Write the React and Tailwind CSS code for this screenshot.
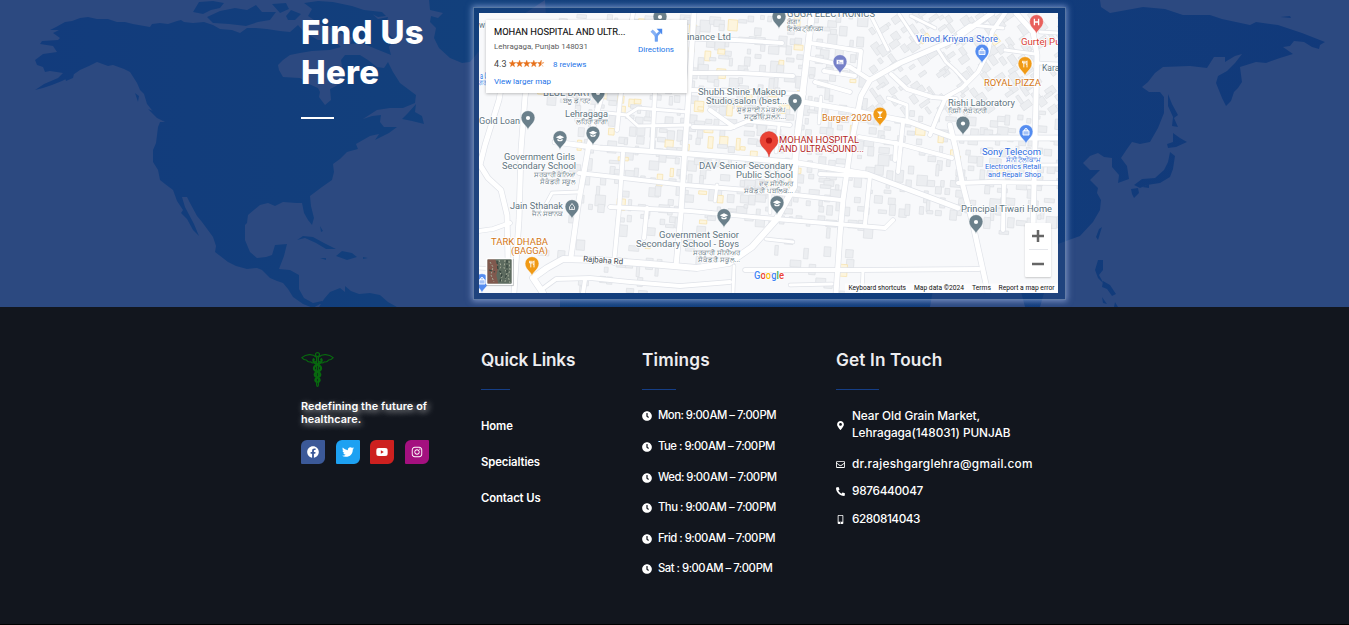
import React from "react";
import {
  FaFacebook,
  FaTwitter,
  FaYoutube,
  FaInstagram,
  FaClock,
  FaMapMarkerAlt,
  FaRegEnvelope,
  FaPhoneAlt,
  FaMobileAlt,
} from "react-icons/fa";

const LAND = [
  // North and Central America
  "M50,30 L56,27 65,22 72,21 80,18 88,17 97,19 108,19 117,22 125,22 133,24 150,27 152,24 160,23 168,24 177,21 181,20 184,22 193,23 204,22 213,25 220,29 232,30 240,33 247,28 256,28 267,29 280,31 290,32 298,25 304,32 318,40 334,40 341,47 330,50 312,51 300,53 290,55 283,60 278,65 279,70 283,77 300,78 309,84 318,88 320,92 319,97 325,105 331,100 330,89 336,86 343,80 342,67 341,60 345,55 360,55 368,60 377,67 384,68 388,62 393,72 400,83 408,89 416,95 415,103 403,108 390,108 377,110 363,119 372,116 381,115 380,122 384,127 397,127 389,133 375,140 379,134 370,136 356,144 358,149 347,152 340,159 333,164 334,172 332,180 322,187 310,196 311,206 314,218 312,225 308,220 304,213 302,203 296,203 283,202 275,206 268,203 260,205 248,215 247,223 245,225 245,240 250,252 257,258 266,257 272,255 275,245 287,244 284,256 279,269 290,270 299,275 299,289 304,298 313,303 322,301 327,305 320,304 313,308 303,304 293,297 288,289 283,283 277,281 270,278 262,270 257,268 247,269 236,266 228,262 215,252 216,246 213,237 202,222 197,216 190,203 187,197 182,197 185,207 194,224 199,236 193,230 187,219 181,213 183,210 177,201 173,190 165,184 160,180 158,170 153,162 153,150 156,143 158,127 160,122 165,122 155,114 147,104 144,94 140,90 137,83 130,72 124,69 113,65 108,66 97,62 89,66 80,70 70,77 62,81 52,85 43,88 35,90 44,84 58,78 63,73 50,71 45,72 43,67 37,65 35,60 43,54 57,52 53,46 40,44 42,41 58,40 60,38 53,33 59,30Z",
  // Arctic archipelago
  "M193,12 L199,2 213,1 224,3 220,8 211,10 203,14Z M207,17 L220,11 235,8 247,10 256,5 262,12 276,12 270,20 258,22 246,26 229,24 213,23Z M272,4 L286,3 289,9 280,13Z M286,16 L291,10 301,14 295,20 288,20Z M304,3 L318,1 333,2 352,6 370,12 378,19 388,17 385,29 394,40 389,47 391,55 376,49 362,43 350,44 353,38 342,34 330,27 320,24 308,16 312,9Z M364,10 L382,12 386,16 378,17Z",
  // Pacific coast islands
  "M135,93 L139,96 138,102Z M148,109 L156,112 165,122 157,118Z M65,78 L74,74 73,78 66,81Z",
  // Newfoundland
  "M416,104 L408,113 402,119 412,121 424,124 422,116 415,112Z",
  // Caribbean
  "M297,240 L303,236 313,237 324,243 336,249 326,249 316,243 305,238Z M336,256 L342,251 352,253 357,257 347,260Z M320,258 L326,258 326,260Z M363,257 L368,258 363,259Z M320,226 L323,231 321,232Z",
  // South America
  "M319,307 L324,299 330,292 340,288 345,292 345,286 351,291 359,294 370,293 380,295 388,302 397,307Z",
  // Greenland
  "M429,0 L545,0 530,10 500,30 480,50 470,62 462,63 450,58 439,48 434,38 436,28 430,22 431,16 438,18 443,13 430,10Z",
  // Northern Eurasia
  "M545,0 L1100,0 1101,7 1110,13 1121,11 1143,7 1165,9 1183,15 1210,15 1222,19 1250,25 1256,22 1278,25 1302,33 1325,42 1320,45 1319,49 1312,47 1304,42 1294,41 1290,46 1283,47 1293,54 1280,58 1266,63 1256,62 1240,67 1242,82 1238,88 1234,92 1231,101 1226,106 1222,98 1216,83 1218,76 1227,71 1235,63 1242,54 1235,56 1225,62 1225,57 1214,57 1207,68 1190,66 1163,67 1155,73 1148,82 1142,87 1149,92 1160,92 1164,97 1164,113 1158,128 1150,142 1140,144 1132,142 1127,149 1121,158 1127,166 1129,179 1118,183 1119,175 1112,167 1112,158 1104,157 1098,153 1090,156 1083,163 1090,170 1100,170 1090,180 1098,188 1097,193 1101,200 1100,210 1093,222 1080,236 1058,244 1040,307 1025,307 1010,250 940,250 930,307 560,307 560,250Z",
  "M1168,94 L1172,104 1178,115 1174,118 1178,127 1172,126 1173,117 1168,106Z",
  "M1173,133 L1180,138 1187,142 1176,147 1168,148 1167,144 1173,142Z",
  "M1170,152 L1175,156 1173,169 1170,177 1160,183 1147,185 1140,188 1134,185 1142,179 1155,178 1164,170 1168,162Z",
  "M1131,189 L1138,188 1139,193 1134,198 1132,194Z M1142,187 L1149,184 1149,188Z",
  "M1099,229 L1102,227 1098,240 1096,237Z",
  "M1098,260 L1103,260 1103,270 1099,275 1104,284 1098,278 1095,270Z M1103,281 L1110,285 1116,294 1112,296 1107,289 1102,287Z M1102,297 L1107,304 1103,303Z M1115,302 L1118,307 1114,307Z",
  "M1280,17 L1290,16 1291,18Z",
];

const ROADS = [
  [5, "M694,13 L691,60 685,147 681,213 676,266"],
  [6, "M812,13 L803,90 796,147 794,187 776,220 752,247 729,263 697,268 650,264 600,260 563,259 547,268 533,278 543,293"],
  [5, "M555,142 L600,148 690,154 792,162 867,174 958,208"],
  [4, "M579,173 L685,185 760,191 841,200"],
  [4, "M610,207 L690,211 776,219 885,228 893,220"],
  [5, "M797,101 L850,110 910,122 954,138 1058,138"],
  [5, "M950,125 L956,150 962,182 973,225 988,293"],
  [4, "M859,137 L900,144 952,158"],
  [5, "M992,13 L954,40 900,63 870,80 861,96 850,150 843,200 840,235 836,293"],
  [4, "M745,270 L860,270 979,269"],
  [5, "M532,60 L525,97 521,150 519,220 514,292"],
  [5, "M506,60 L499,100 485,145 480,165 488,178 501,190 507,215 508,260"],
  [4, "M479,231 L493,229 510,223"],
  [3, "M479,162 L485,145 M479,268 L509,270"],
  [4, "M693,73 L740,73 793,76 M692,90 L804,94 M673,38 L735,40 782,43"],
  [4, "M633,13 L620,100 617,130 M655,93 L652,150"],
  [5, "M606,80 L596,115 588,150 579,200 571,257"],
  [3, "M598,112 L627,115 638,108 688,112 M627,116 L638,126 690,125"],
  [4, "M693,127 L731,128 748,121 790,125 M710,110 L734,127"],
  [5, "M1016,13 L1033,32 1037,55 1035,140 1033,230"],
  [4, "M1005,13 L992,32 988,52 978,72 962,88 946,97 938,115 930,135"],
  [4, "M891,74 L907,89 932,97 956,99"],
  [3, "M937,48 L946,62 955,70 966,82 M958,33 L970,25 1003,28"],
  [3, "M870,14 L888,50 M899,14 L918,43 M911,16 L935,28"],
  [4, "M810,43 L830,46 861,51 859,70 M809,58 L850,67 870,80 M824,71 L855,76 M815,82 L850,92"],
  [3, "M821,97 L819,123 M907,121 L907,105 888,98"],
  [4, "M958,183 L990,182 1058,183 M1004,183 L1003,230"],
  [4, "M820,174 L870,176 865,224 M903,122 L898,172 M896,143 L895,160"],
  [4, "M541,290 L556,279 590,278 630,282 680,286 730,282 M585,280 L583,293"],
  [4, "M623,153 L619,210 614,263 M647,208 L644,238"],
  [3, "M717,185 L715,201 M734,266 L733,293 M766,239 L793,242 M770,213 L770,191"],
  [3, "M863,270 L862,293 M790,285 L832,284 M776,152 L779,125"],
  [3, "M1005,50 L1035,54 M1037,63 L1058,64 M1033,165 L1058,165 M1040,32 L1058,33"],
  [3, "M540,215 L552,193 578,192"],
];

function makeBuildings() {
  let s = 77;
  const rnd = () => {
    s = (s * 1103515245 + 12345) % 2147483648;
    return s / 2147483648;
  };
  const out = [];
  for (let y = 14; y < 292; y += 10) {
    for (let x = 534; x < 1056; x += 10) {
      const px = x + rnd() * 7;
      const py = y + rnd() * 7;
      const w = 3 + rnd() * 8;
      const h = 3 + rnd() * 9;
      const keep = rnd();
      const warm = rnd();
      const open =
        (px > 868 && px < 965 && py > 212) ||
        (px > 850 && py > 232) ||
        (px > 575 && px < 612 && py > 210 && py < 235) ||
        (px > 700 && px < 775 && py > 222) ||
        (px > 525 && px < 575 && py > 100 && keep > 0.12) ||
        (py > 225 && keep > 0.3);
      if (open || keep > 0.74) continue;
      out.push({ px, py, w, h, rot: px > 860 && py < 110 ? -35 : 4, warm: warm > (px < 800 && py < 200 ? 0.87 : 0.975) });
    }
  }
  return out;
}
const BUILDINGS = makeBuildings();

const GREY = "#5f7581";
const LABELS = [
  // x, y, width, size, colour, anchor, text
  [787, 17, 88, 9.2, GREY, "start", "GOGA ELECTRONICS"],
  [787, 24, 13, 7, GREY, "start", "ਗੋਗਾ"],
  [787, 30.5, 37, 7, GREY, "start", "ਇਲੈਕਟ੍ਰੋਨਿਕਸ"],
  [687, 40, 44, 9.2, GREY, "start", "inance Ltd"],
  [479, 28, 6, 9, GREY, "start", "w"],
  [480, 79, 8, 9, "#1a73e8", "start", "a C"],
  [479, 85, 7, 7, "#1a73e8", "start", "ਗਰ"],
  [543, 96, 48, 9.2, GREY, "start", "BLUE DART"],
  [563, 102.5, 27, 7, GREY, "start", "ਬਲੂ ਡਾਰਟ"],
  [565, 117, 43, 9.2, GREY, "start", "Lehragaga"],
  [576, 123.5, 32, 7, GREY, "start", "ਲਹਿਰਾਗਾਗਾ"],
  [479, 124, 41, 9.2, GREY, "start", "Gold Loan"],
  [575, 160, 71, 9.2, GREY, "end", "Government Girls"],
  [576, 169, 74, 9.2, GREY, "end", "Secondary School"],
  [576, 177, 42, 7, GREY, "end", "ਸਰਕਾਰੀ ਕੰਨਿਆ"],
  [576, 184, 36, 7, GREY, "end", "ਸੈਕੰਡਰੀ ਸਕੂਲ"],
  [563, 209, 53, 9.2, GREY, "end", "Jain Sthanak"],
  [563, 216, 31, 7, GREY, "end", "ਜੈਨ ਸਥਾਨਕ"],
  [548, 245, 57, 9.4, "#d27616", "end", "TARK DHABA"],
  [548, 254, 37, 9.4, "#d27616", "end", "(BAGGA)"],
  [786, 95, 88, 9.2, GREY, "end", "Shubh Shine Makeup"],
  [787, 104, 81, 9.2, GREY, "end", "Studio,salon (best..."],
  [786, 112, 49, 7, GREY, "end", "ਸ਼ੁਭ ਸ਼ਾਈਨ ਮੇਕਅੱਪ"],
  [786, 119, 42, 7, GREY, "end", "ਸਟੂਡੀਓ,ਸਲੋਨ..."],
  [793, 169, 94, 9.2, GREY, "end", "DAV Senior Secondary"],
  [793, 178, 57, 9.2, GREY, "end", "Public School"],
  [793, 186, 34, 7, GREY, "end", "ਦਵ ਸੀਨੀਅਰ"],
  [793, 193, 49, 7, GREY, "end", "ਸਕੈਡਰੀ ਪਬਲਿਕ..."],
  [739, 238, 80, 9.2, GREY, "end", "Government Senior"],
  [739, 247, 103, 9.2, GREY, "end", "Secondary School - Boys"],
  [740, 254.5, 47, 7, GREY, "end", "ਸਰਕਾਰੀ ਸੀਨੀਅਰ"],
  [740, 262, 42, 7, GREY, "end", "ਸੈਕੰਡਰੀ ਸਕੂਲ..."],
  [822, 120.5, 50, 9.4, "#d27616", "start", "Burger 2020"],
  [779, 142.5, 80, 9.4, "#b3261e", "start", "MOHAN HOSPITAL"],
  [779, 151.5, 85, 9.4, "#b3261e", "start", "AND ULTRASOUND..."],
  [916, 41.5, 82, 9.2, "#3d6fd9", "start", "Vinod Kriyana Store"],
  [1021, 44.5, 45, 9.2, "#d93c35", "start", "Gurtej Puri"],
  [984, 86, 57, 9.4, "#d27616", "start", "ROYAL PIZZA"],
  [1042, 70.5, 22, 9.2, GREY, "start", "Karan"],
  [948, 106, 67, 9.2, GREY, "start", "Rishi Laboratory"],
  [948, 113, 39, 7, GREY, "start", "ਰਿਸ਼ੀ ਲੈਬੋਰਟਰੀ"],
  [1041, 155, 59, 9.2, "#2d6be0", "end", "Sony Telecom"],
  [1041, 162, 35, 7, "#2d6be0", "end", "ਸੋਨੀ ਟੈਲੀਕਾਮ"],
  [1041, 169, 56, 7.6, "#2d6be0", "end", "Electronics Retail"],
  [1041, 176.5, 53, 7.6, "#2d6be0", "end", "and Repair Shop"],
  [961, 212, 91, 9.2, GREY, "start", "Principal Tiwari Home"],
];

const CAP = <path d="M-4.2,-.8 L0,-2.8 4.2,-.8 0,1.3Z M-2.6,.8 V2.4 C-1,3.6 1,3.6 2.6,2.4 V.8 L0,2.2Z" fill="#fff" />;
const DOT = <circle r="2.1" fill="#fff" />;
const FORK = <path d="M-2.4,-3.2 V-1 M-1.2,-3.2 V3.4 M0,-3.2 V-1 M-2.4,-1 H0 M2,3.4 V-3.2 C.9,-2.4 .9,-.6 1.2,.4 H2" stroke="#fff" strokeWidth=".9" fill="none" />;
const BAG = <path d="M-3,-1.2 H3 V3 H-3Z M-1.5,-1 V-2.4 C-1.4,-3.8 1.4,-3.8 1.5,-2.4 V-1" stroke="#fff" strokeWidth=".9" fill="#ffffff77" />;
const PINS = [
  [660, 17, "#6b808b", DOT],
  [779, 17, "#6b808b", DOT],
  [598, 93, "#6b808b", DOT],
  [528, 118, "#6b808b", DOT],
  [560, 138, "#6b808b", CAP],
  [593, 133.5, "#6b808b", CAP],
  [572, 207, "#6b808b", <path key="t" d="M-2.5,2.5 H2.5 V0 L0,-3.5 L-2.5,0Z M0,0 V2.5" fill="none" stroke="#fff" strokeWidth=".8" />],
  [795, 101, "#6b808b", DOT],
  [777, 203, "#6b808b", CAP],
  [724, 216, "#6b808b", CAP],
  [963, 123.5, "#6b808b", DOT],
  [976, 222, "#6b808b", DOT],
  [840, 62, "#7580c8", <path key="c" d="M-3.8,-2.4 H3.8 V2.6 H-3.8Z M-2,-.6 H-.5 M-2,1 H2.5" fill="#fff" stroke="#7580c8" strokeWidth=".7" />],
  [880, 114.5, "#f09a16", <path key="g" d="M-3,-3 H3 L.5,0 V2.6 H2 V3.4 H-2 V2.6 H-.5 V0Z" fill="#fff" />],
  [1025, 64, "#f09a16", FORK],
  [532, 264, "#f09a16", FORK],
  [982, 51.5, "#548cf0", BAG],
  [1026, 132, "#548cf0", BAG],
  [482, 281, "#548cf0", BAG],
  [1036.5, 22, "#e8605c", <path key="h" d="M-2.1,-3.2 V3.2 M2.1,-3.2 V3.2 M-2.1,0 H2.1" stroke="#fff" strokeWidth="1.3" />],
];

function WorldMap() {
  return (
    <svg className="absolute inset-0 h-full w-full" viewBox="0 0 1349 307" preserveAspectRatio="none">
      <defs>
        <linearGradient id="land" x1="0" x2="1349" y1="0" y2="0" gradientUnits="userSpaceOnUse">
          <stop offset="0" stopColor="#123b7c" />
          <stop offset=".35" stopColor="#12407c" />
          <stop offset="1" stopColor="#11397a" />
        </linearGradient>
      </defs>
      {LAND.map((d) => (
        <path key={d} d={d} fill="url(#land)" />
      ))}
    </svg>
  );
}

function StreetMap() {
  return (
    <svg className="block h-[280px] w-[579px]" viewBox="479 13 579 280" fontFamily="Roboto, 'Noto Sans', sans-serif">
      <rect x="479" y="13" width="579" height="280" fill="#f8f9fb" />
      <g>
        {BUILDINGS.map((b, i) => (
          <rect
            key={i}
            x={b.px}
            y={b.py}
            width={b.w}
            height={b.h}
            transform={`rotate(${b.rot} ${b.px} ${b.py})`}
            fill={b.warm ? "#fdf5de" : "#eceef1"}
            stroke={b.warm ? "#f6e2ab" : "#dee1e5"}
            strokeWidth=".7"
          />
        ))}
      </g>
      <g fill="none" strokeLinejoin="round" strokeLinecap="round">
        {ROADS.map(([w, d]) => (
          <path key={d} d={d} stroke="#dfe2e8" strokeWidth={w + 1.3} />
        ))}
        {ROADS.map(([w, d]) => (
          <path key={d} d={d} stroke="#ffffff" strokeWidth={w} />
        ))}
      </g>
      <g>
        {PINS.map(([x, y, c, glyph], i) => (
          <g key={i} transform={`translate(${x} ${y})`}>
            <path d="M0,12 C-.8,7.6 -6.9,5.6 -6.9,-.4 A6.9,6.9 0 0 1 6.9,-.4 C6.9,5.6 .8,7.6 0,12Z" fill={c} stroke="#fff" strokeWidth=".4" />
            {glyph}
          </g>
        ))}
        <path d="M769,157 C768,149.5 760,147.5 760,140.5 A9,9 0 0 1 778,140.5 C778,147.5 770,149.5 769,157Z" fill="#ea4335" stroke="#c5221f" strokeWidth=".4" />
        <circle cx="769" cy="140.5" r="3.1" fill="#b31412" />
      </g>
      <g paintOrder="stroke" stroke="#ffffff" strokeWidth="1.6" strokeLinejoin="round">
        {LABELS.map(([x, y, w, s, c, a, t]) => (
          <text key={t + y} x={x} y={y} fontSize={s} fill={c} textAnchor={a} textLength={w} lengthAdjust="spacingAndGlyphs">
            {t}
          </text>
        ))}
        <text x="583" y="261.5" fontSize="8" fill="#444b52" textLength="40" lengthAdjust="spacingAndGlyphs" transform="rotate(4 583 261)">
          Rajbaha Rd
        </text>
        <text x="754" y="279" fontSize="10.5" fontWeight="500" textLength="30" lengthAdjust="spacingAndGlyphs">
          <tspan fill="#4285f4">G</tspan>
          <tspan fill="#ea4335">o</tspan>
          <tspan fill="#fbbc04">o</tspan>
          <tspan fill="#4285f4">g</tspan>
          <tspan fill="#34a853">l</tspan>
          <tspan fill="#ea4335">e</tspan>
        </text>
      </g>
      <rect x="845" y="283.5" width="213" height="9.5" fill="#ffffff" opacity=".7" />
      <g fontSize="7" fill="#111">
        <text x="848.5" y="290" textLength="57.5" lengthAdjust="spacingAndGlyphs">Keyboard shortcuts</text>
        <text x="914" y="290" textLength="50" lengthAdjust="spacingAndGlyphs">Map data ©2024</text>
        <text x="972" y="290" textLength="19" lengthAdjust="spacingAndGlyphs">Terms</text>
        <text x="998.5" y="290" textLength="56" lengthAdjust="spacingAndGlyphs">Report a map error</text>
      </g>
      <g>
        <rect x="486.7" y="258.7" width="25.6" height="25.6" rx="1" fill="#5d6b5f" />
        <path d="M487.3,259.3 h8 l3,8 -2,8 2,8.5 h-11Z" fill="#80594e" />
        <path d="M499,260 l2,6 -2,5 3,5 -1,7 M505,260 l-1,8 3,5 -2,9 M509,261 l1,9 -2,6 2,7 M490,262 l3,5 -2,8 3,7" stroke="#a3aa98" strokeWidth="1" fill="none" strokeDasharray="2 1.5" />
        <path d="M497,261 l1,9 4,3 -2,9 M507,260 v12 l-2,8 M489,270 l6,2" stroke="#38463f" strokeWidth="1.3" fill="none" strokeDasharray="3 2" />
        <rect x="486.5" y="258.5" width="26" height="26" rx="1.5" fill="none" stroke="#fff" strokeWidth="1.6" />
        <path d="M486,285.6 H513.4 V259" fill="none" stroke="#9a9fa3" strokeWidth=".6" />
      </g>
    </svg>
  );
}

function MapCard() {
  return (
    <div className="absolute top-[7px] left-[7px] h-[73px] w-[201px] bg-white font-['Roboto',sans-serif] shadow-[0_1px_3px_rgba(0,0,0,0.25)]">
      <svg className="block h-[73px] w-[201px]" viewBox="486 20 201 73">
        <g>
          <text x="494" y="35" fontSize="9.3" fill="#111" stroke="#111" strokeWidth=".12" textLength="131.5" lengthAdjust="spacingAndGlyphs">MOHAN HOSPITAL AND ULTR...</text>
          <text x="494" y="49" fontSize="7.8" fill="#5b5b5b" textLength="94" lengthAdjust="spacingAndGlyphs">Lehragaga, Punjab 148031</text>
          <text x="494" y="67" fontSize="8.8" fill="#444" textLength="12.5" lengthAdjust="spacingAndGlyphs">4.3</text>
          <text x="553" y="67" fontSize="7.8" fill="#1a73e8" textLength="33.5" lengthAdjust="spacingAndGlyphs">8 reviews</text>
          <text x="494" y="84" fontSize="7.8" fill="#1a73e8" textLength="57" lengthAdjust="spacingAndGlyphs">View larger map</text>
          <text x="638" y="52" fontSize="7.8" fill="#1a73e8" textLength="36" lengthAdjust="spacingAndGlyphs">Directions</text>
        </g>
        {[0, 1, 2, 3, 4].map((i) => (
          <path
            key={i}
            transform={`translate(${512.5 + i * 7.1} 63.7)`}
            d={i < 4 ? "M0,-3.5 L.9,-1.1 3.4,-1.1 1.4,.5 2.1,3 0,1.5 -2.1,3 -1.4,.5 -3.4,-1.1 -.9,-1.1Z" : "M.4,-3.5 V1.4 L-2.1,3 -1.4,.5 -3.4,-1.1 -.9,-1.1Z M1.6,-1.2 L2.8,-1.2 1.6,.2 M1.5,1.4 L2.1,3"}
            fill="#e7711b"
            stroke="#e7711b"
            strokeWidth=".4"
          />
        ))}
        <path d="M656.3,41.5 V37 C656.3,34 654,33 651.6,30.6" fill="none" stroke="#88b2f5" strokeWidth="3.2" />
        <path d="M656.3,41.5 V37.5 C656.3,34.5 658,33.8 660,32" fill="none" stroke="#6ba0f2" strokeWidth="2.6" />
        <path d="M656.6,28.8 H662.2 V34.6Z" fill="#4a89ec" />
      </svg>
    </div>
  );
}

function ZoomControl() {
  return (
    <div className="absolute right-[7px] bottom-4 flex h-[54px] w-[26px] flex-col items-center rounded-[1px] bg-white shadow-[0_1px_2px_rgba(0,0,0,0.2)]">
      <div className="flex h-[27px] w-[19px] items-center justify-center border-b border-gray-200">
        <svg className="h-3 w-3" viewBox="0 0 12 12"><path d="M6,0 V12 M0,6 H12" stroke="#666" strokeWidth="2.5" /></svg>
      </div>
      <div className="flex h-[27px] items-center">
        <svg className="h-3 w-3" viewBox="0 0 12 12"><path d="M0,6 H12" stroke="#666" strokeWidth="2.5" /></svg>
      </div>
    </div>
  );
}

function Caduceus() {
  return (
    <svg className="h-9 w-[33px]" viewBox="0 0 33 36" fill="none" stroke="#08680f" strokeWidth="1.2" strokeLinejoin="round">
      <circle cx="16.5" cy="2.6" r="2" />
      <path d="M15,5 C12,1.5 5,2 .8,5.6 C2.5,7.6 4.2,8 5.4,8 C6.8,10.2 8.5,10.2 9.8,9.8 C11.2,11.4 13.4,11.2 15,9.2" />
      <path d="M18,5 C21,1.5 28,2 32.2,5.6 C30.5,7.6 28.8,8 27.6,8 C26.2,10.2 24.5,10.2 23.2,9.8 C21.8,11.4 19.6,11.2 18,9.2" />
      <path d="M15.6,4.8 V33 C15.8,34.8 17.2,34.8 17.4,33 V4.8" />
      <path d="M13.4,6.6 C11,8.5 13,11 16.5,12.6 C21.5,15 21,18 16.5,19.8 C12.5,21.6 13,24.2 16.5,25.6 C19.8,27.2 19.2,29.4 16.5,30.6" strokeWidth="2.2" />
      <path d="M19.6,6.6 C22,8.5 20,11 16.5,12.6 C11.5,15 12,18 16.5,19.8 C20.5,21.6 20,24.2 16.5,25.6 C13.2,27.2 13.8,29.4 16.5,30.6" strokeWidth="2.2" />
    </svg>
  );
}

const SOCIAL = [
  [FaFacebook, "bg-[#3b5998]"],
  [FaTwitter, "bg-[#1da1f2]"],
  [FaYoutube, "bg-[#cd201f]"],
  [FaInstagram, "bg-[#a4107f]"],
];

const TIMES = [
  ["Mon:", "h-[31px]"],
  ["Tue :", "h-[31px]"],
  ["Wed:", "h-[30.5px]"],
  ["Thu :", "h-[30.5px]"],
  ["Frid :", "h-[30.5px]"],
  ["Sat :", "h-[30.5px]"],
];

function Heading({ children, rule, track }) {
  return (
    <>
      <h2 className={`h-[26px] text-[17.2px] leading-[26px] font-semibold whitespace-nowrap text-[#ededf0] ${track}`}>{children}</h2>
      <div className={`mt-4 h-px bg-[#153e86] ${rule}`} />
    </>
  );
}

export default function App() {
  return (
    <div className="flex h-[625px] w-full flex-col overflow-hidden bg-[#12161e] font-['Inter',sans-serif] text-white">
      <section className="relative h-[307px] shrink-0 overflow-hidden bg-[#2c4980]">
        <WorldMap />
        <div className="relative flex pl-[301px]">
          <div className="w-[172px] pt-3">
            <h1 className="text-[33px] leading-[40px] font-extrabold tracking-[0.3px]">
              Find Us
              <br />
              Here
            </h1>
            <div className="mt-[25px] h-0.5 w-[33px] bg-white" />
          </div>
          <div className="mt-[7px] h-[293px] w-[593px] border border-white/30 bg-[#123d7c]/50 p-[5px] shadow-[0_0_6px_1px_rgba(190,205,255,0.55)]">
            <div className="relative h-[280px] w-[579px] overflow-hidden">
              <StreetMap />
              <MapCard />
              <ZoomControl />
            </div>
          </div>
        </div>
      </section>

      <footer className="flex flex-1 border-b border-black pt-10 pl-[301px]">
        <div className="w-[180px] pt-[5px]">
          <Caduceus />
          <p className="mt-3 text-[10.8px] leading-[13px] font-semibold tracking-[0.1px] whitespace-nowrap [text-shadow:2px_2px_6px_rgba(255,255,255,0.75)]">
            Redefining the future of
            <br />
            healthcare.
          </p>
          <div className="mt-3.5 flex gap-[10.7px]">
            {SOCIAL.map(([Icon, bg]) => (
              <div key={bg} className={`flex h-6 w-6 items-center justify-center rounded-tl-[6px] rounded-br-[6px] rounded-tr-[1px] rounded-bl-[1px] ${bg}`}>
                <Icon className="h-3 w-3" />
              </div>
            ))}
          </div>
        </div>

        <div className="w-[161px]">
          <Heading rule="w-[29px]" track="tracking-[-0.2px]">Quick Links</Heading>
          <ul className="mt-[18px] text-[11.3px] font-semibold tracking-[-0.1px]">
            {["Home", "Specialties", "Contact Us"].map((t) => (
              <li key={t} className="flex h-9 items-center">{t}</li>
            ))}
          </ul>
        </div>

        <div className="w-[194px]">
          <Heading rule="w-[34px]" track="tracking-[0.2px]">Timings</Heading>
          <ul className="mt-2.5 text-[11.3px] font-medium tracking-[-0.5px]">
            {TIMES.map(([day, height]) => (
              <li key={day} className={`flex items-center gap-1.5 whitespace-nowrap ${height}`}>
                <FaClock className="mt-px h-2.5 w-2.5" />
                <span>
                  {day} 9:00<span className="-ml-0.5"> AM</span> – 7:00<span className="-ml-0.5"> PM</span>
                </span>
              </li>
            ))}
          </ul>
        </div>

        <div className="w-[220px]">
          <Heading rule="w-[43px]" track="tracking-[0.15px]">Get In Touch</Heading>
          <ul className="mt-[18px] text-[11.8px] leading-[17px] font-medium whitespace-nowrap">
            <li className="flex items-center gap-[7px]">
              <FaMapMarkerAlt className="h-[9px] w-[9px]" />
              <span className="tracking-[-0.05px]">
                Near Old Grain Market,
                <br />
                Lehragaga(148031) PUNJAB
              </span>
            </li>
            <li className="mt-3.5 flex items-center gap-[7px]">
              <FaRegEnvelope className="h-[9px] w-[9px]" />
              <span className="tracking-[0.27px]">dr.rajeshgarglehra@gmail.com</span>
            </li>
            <li className="mt-2.5 flex items-center gap-[7px]">
              <FaPhoneAlt className="h-[9px] w-[9px]" />
              <span className="tracking-[-0.3px]">9876440047</span>
            </li>
            <li className="mt-[11px] flex items-center gap-[7px]">
              <FaMobileAlt className="h-[9px] w-[9px]" />
              <span className="tracking-[-0.45px]">6280814043</span>
            </li>
          </ul>
        </div>
      </footer>
    </div>
  );
}
